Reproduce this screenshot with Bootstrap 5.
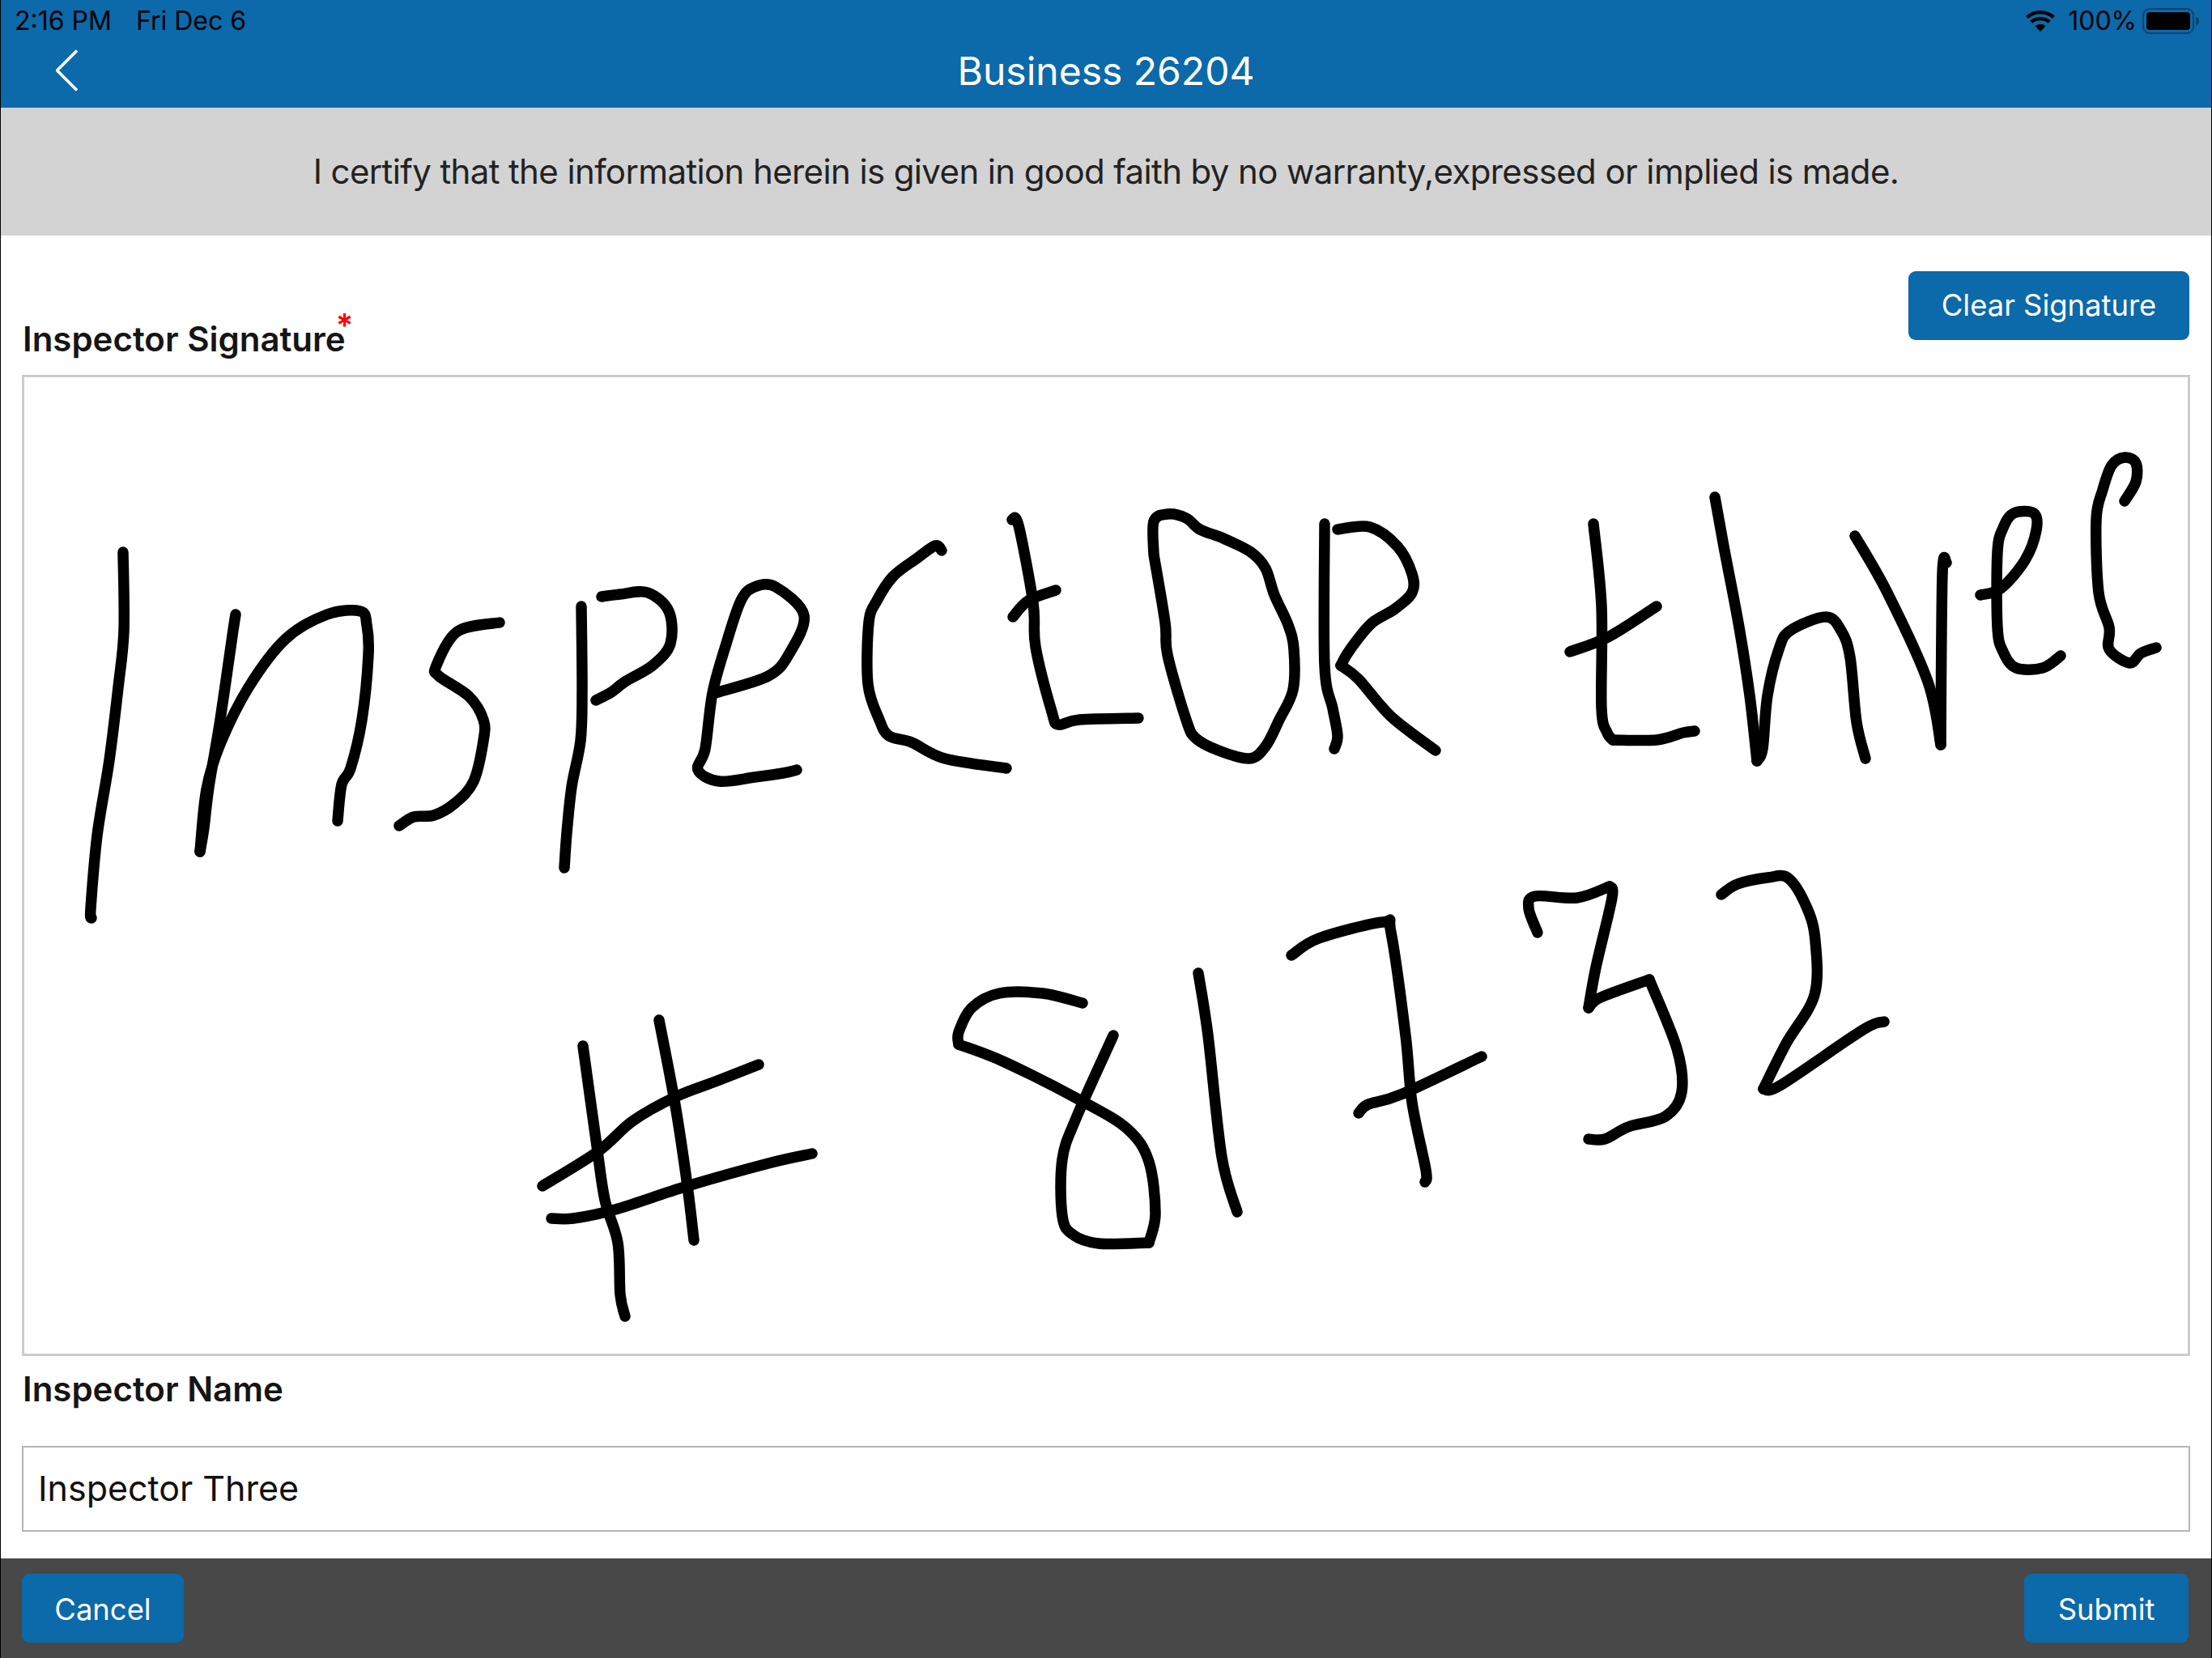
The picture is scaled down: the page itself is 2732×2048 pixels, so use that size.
<!DOCTYPE html>
<html lang="en">
<head>
<meta charset="utf-8">
<title>Business 26204</title>
<link href="https://cdn.jsdelivr.net/npm/bootstrap@5.3.0/dist/css/bootstrap.min.css" rel="stylesheet">
<style>
html,body{height:100%}
body{font-family:Inter,"Liberation Sans",sans-serif;color:#151515;background:#fff;border-left:1px solid #000;border-right:1px solid #000;overflow:hidden}
.app-head{height:133px;background:#0c69aa;flex:none}
.stat-row{height:52px;padding:0 13px 0 17px;font-size:32px;line-height:30px;color:#000}
.stat-date{margin-left:30px}
.stat-pct{margin:0 7px 0 15px}
.title-row{height:81px}
.side-slot{flex:1 1 0;padding-left:68px}
.side-slot svg{display:block;width:28px;height:52px;margin-top:-12px}
.head-title{font-size:48px;line-height:60px;color:#fff;margin-top:-9px}
.cert-band{height:158px;background:#d3d3d3;font-size:42px;letter-spacing:-.62px;color:#222;padding-bottom:2px;flex:none}
.form-top{height:172px;padding:44px 27px 0 26px;flex:none}
.sig-label{font-size:42px;font-weight:600;line-height:50px;margin:0 0 19px 1px}
.req-star{color:#f00;font-size:40px;line-height:0;margin-left:-12px;position:relative;top:-18px}
.app-btn{background:#0c69aa;border:0;border-radius:9px;color:#fff;font-size:36.4px;height:85px;line-height:85px;padding:0;--bs-btn-hover-bg:#0c69aa;--bs-btn-hover-color:#fff}
.btn-clear{width:347px}
.btn-cancel{width:200px;padding-top:2px}
.btn-submit{width:203px;padding-top:2px}
.sig-box{height:1212px;margin:0 26px;border:3px solid #ccc;flex:none}
.sig-box svg{display:block;width:100%;height:100%}
.sig-box path{fill:none;stroke:#000;stroke-width:13.5;stroke-linecap:round;stroke-linejoin:round}
.name-wrap{padding:0 26px;flex:none}
.name-label{font-size:42px;font-weight:600;line-height:50px;margin:16px 0 0 1px}
.name-input{height:106px;margin-top:45px;border:2px solid #b5b5b5;border-radius:0;font-size:43px;padding:0 18px 2px;color:#111}
.app-foot{background:#484848;height:123px;margin-top:auto;padding:19px 28px 0 26px;flex:none}
</style>
</head>
<body class="d-flex flex-column">
<header class="app-head">
  <div class="stat-row d-flex align-items-center justify-content-between">
    <div><span>2:16 PM</span><span class="stat-date">Fri Dec 6</span></div>
    <div class="d-flex align-items-center">
      <svg width="38" height="28" viewBox="0 0 38 28" aria-hidden="true"><path d="M19 27 L12.6 20.2 C16.2 17 21.8 17 25.4 20.2 Z" fill="#000"/><path d="M7.8 15.2 C13.6 9.8 24.4 9.8 30.2 15.2" fill="none" stroke="#000" stroke-width="4.4"/><path d="M2.6 9.4 C11.6 1 26.4 1 35.4 9.4" fill="none" stroke="#000" stroke-width="4.4"/></svg>
      <span class="stat-pct">100%</span>
      <svg width="72" height="32" viewBox="0 0 72 32" aria-hidden="true"><rect x="1" y="1" width="62" height="30" rx="8" fill="none" stroke="#000" stroke-opacity=".35" stroke-width="2"/><rect x="5" y="5" width="54" height="22" rx="4" fill="#000"/><path d="M66 10.5 C69 11.5 70 13.5 70 16 C70 18.5 69 20.5 66 21.5 Z" fill="#000" fill-opacity=".4"/></svg>
    </div>
  </div>
  <div class="title-row d-flex align-items-center">
    <div class="side-slot"><svg viewBox="0 0 28 52" aria-hidden="true"><path d="M26 1.5 L1.5 26 L26 50.5" fill="none" stroke="#fff" stroke-width="3.6"/></svg></div>
    <div class="head-title">Business 26204</div>
    <div class="side-slot"></div>
  </div>
</header>
<section class="cert-band d-flex align-items-center justify-content-center">I certify that the information herein is given in good faith by no warranty,expressed or implied is made.</section>
<div class="form-top d-flex justify-content-between align-items-start">
  <label class="sig-label align-self-end">Inspector Signature<span class="req-star">*</span></label>
  <button type="button" class="btn app-btn btn-clear">Clear Signature</button>
</div>
<div class="sig-box">
  <svg id="sigpad" viewBox="30 464 2672 1206" preserveAspectRatio="none" aria-label="Handwritten signature" role="img"></svg>
</div>
<div class="name-wrap">
  <label class="name-label d-block" for="inspName">Inspector Name</label>
  <input id="inspName" class="form-control name-input" type="text" value="Inspector Three">
</div>
<footer class="app-foot d-flex justify-content-between align-items-start">
  <button type="button" class="btn app-btn btn-cancel">Cancel</button>
  <button type="button" class="btn app-btn btn-submit">Submit</button>
</footer>
<script src="https://cdn.jsdelivr.net/npm/bootstrap@5.3.0/dist/js/bootstrap.bundle.min.js"></script>
<script>
var strokes=[
[152,680,153,777,146,847,135,937,120,1030,112,1120,113,1132],
[291,757,287,783,272,887,258,970,252,1020,247,1050],
[247,1050,255,973,272,917,307,847,353,787,404,757,445,753,453,770,455,807,447,887,433,947,422,967,417,1012],
[617,767,565,778,539,820,542,833,579,858,597,887,597,913,585,963,562,990,536,1005,511,1007,493,1018],
[718,747,719,853,717,913,706,970,700,1027,697,1070],
[743,735,766,732,800,730,826,753,828,793,806,820,772,840,755,853,736,863],
[883,854,949,833,975,805,993,758,958,723,932,723,915,740,897,793,880,854,871,923,862,949,888,963,932,958,967,953,984,949],
[1163,678,1155,672,1132,688,1103,710,1083,740,1073,767,1072,843,1086,887,1098,907,1126,915,1167,935,1243,947],
[1250,640,1258,647,1276,743,1279,797,1299,877,1307,893,1333,887,1406,885],
[1304,727,1270,740,1251,760],
[1425,683,1425,642,1442,633,1465,638,1482,652,1511,663,1545,680,1563,700,1574,733,1591,770,1598,800,1597,850,1580,887,1563,920,1543,935,1505,925,1477,910,1465,887,1442,807,1439,767,1425,683],
[1636,645,1636,820,1646,873,1652,907,1648,923],
[1652,652,1692,649,1726,673,1744,707,1744,730,1723,750,1695,767,1675,790,1663,807,1656,820],
[1656,820,1678,837,1718,883,1773,925],
[1968,645,1978,747,1978,873,1985,903,1992,912],
[1992,912,2046,912,2079,903,2093,901],
[1939,803,1986,785,2046,747],
[2118,612,2129,673,2148,773,2161,857,2170,938],
[2170,938,2177,923,2183,857,2197,800,2211,777,2255,760,2274,777,2285,810,2293,890,2304,935],
[2291,660,2331,730,2381,840,2397,918],
[2397,918,2399,707,2404,693],
[2446,733,2471,725,2501,690,2515,653,2512,632,2487,632,2474,650,2467,680,2467,773,2474,803,2490,823,2523,823,2545,808],
[2624,617,2638,593,2638,570,2624,563,2608,573,2597,603,2589,640,2592,730,2605,773,2605,800,2630,817,2644,805,2663,798],
[720,1290,737,1413,747,1480,763,1533,766,1597,772,1624],
[814,1258,834,1363,849,1463,857,1530],
[670,1463,739,1420,781,1383,834,1353,886,1333,937,1313],
[681,1503,708,1503,760,1492,849,1463,949,1435,1003,1423],
[1337,1237,1288,1225,1234,1225,1200,1243,1184,1273,1184,1288],
[1184,1288,1241,1310,1336,1358,1393,1393,1419,1433,1427,1497,1419,1533],
[1419,1533,1357,1534,1325,1523,1312,1500,1312,1430,1330,1377,1375,1277],
[1480,1200,1492,1277,1509,1427,1528,1495],
[1595,1178,1629,1157,1708,1137,1718,1150,1736,1277,1744,1360,1761,1443,1760,1458],
[1678,1373,1690,1362,1730,1350,1830,1303],
[1899,1150,1888,1120,1896,1105,1948,1107,1988,1093],
[1988,1093,1991,1107,1971,1193,1962,1243],
[1962,1243,1977,1230,2037,1208],
[2037,1208,2071,1293,2077,1347,2057,1377,2011,1390,1982,1405,1962,1405],
[2126,1103,2146,1090,2183,1082,2209,1083,2232,1120,2242,1160,2241,1227,2206,1287,2178,1343],
[2178,1343,2200,1338,2301,1270,2327,1260]
];
var pad=document.getElementById('sigpad');
strokes.forEach(function(s){
  var p=[];for(var i=0;i<s.length;i+=2)p.push([s[i],s[i+1]]);
  var d='M'+p[0][0]+' '+p[0][1];
  for(i=0;i<p.length-1;i++){
    var a=p[i-1]||p[i],b=p[i],c=p[i+1],e=p[i+2]||c;
    d+=' C'+(b[0]+(c[0]-a[0])/6).toFixed(1)+' '+(b[1]+(c[1]-a[1])/6).toFixed(1)+' '+(c[0]-(e[0]-b[0])/6).toFixed(1)+' '+(c[1]-(e[1]-b[1])/6).toFixed(1)+' '+c[0]+' '+c[1];
  }
  var el=document.createElementNS('http://www.w3.org/2000/svg','path');
  el.setAttribute('d',d);pad.appendChild(el);
});
</script>
</body>
</html>
